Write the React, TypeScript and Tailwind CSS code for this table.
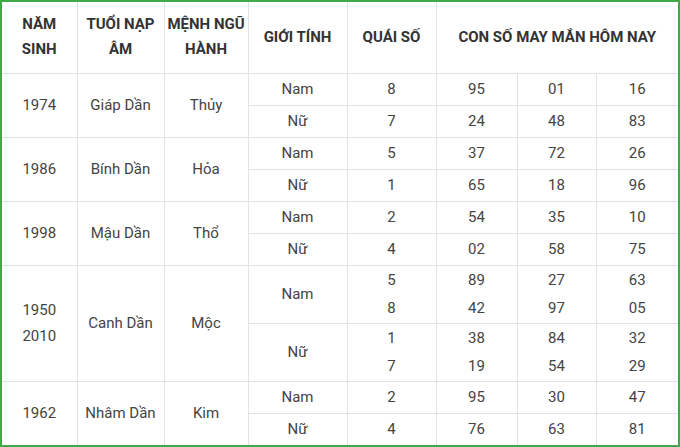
import React from "react";

type Row = {
  year: string[];
  napAm: string;
  menh: string;
  nam: { quai: string[]; nums: string[][] };
  nu: { quai: string[]; nums: string[][] };
  tall?: boolean;
};

const rows: Row[] = [
  {
    year: ["1974"],
    napAm: "Giáp Dần",
    menh: "Thủy",
    nam: { quai: ["8"], nums: [["95", "01", "16"]] },
    nu: { quai: ["7"], nums: [["24", "48", "83"]] },
  },
  {
    year: ["1986"],
    napAm: "Bính Dần",
    menh: "Hỏa",
    nam: { quai: ["5"], nums: [["37", "72", "26"]] },
    nu: { quai: ["1"], nums: [["65", "18", "96"]] },
  },
  {
    year: ["1998"],
    napAm: "Mậu Dần",
    menh: "Thổ",
    nam: { quai: ["2"], nums: [["54", "35", "10"]] },
    nu: { quai: ["4"], nums: [["02", "58", "75"]] },
  },
  {
    year: ["1950", "2010"],
    napAm: "Canh Dần",
    menh: "Mộc",
    nam: {
      quai: ["5", "8"],
      nums: [
        ["89", "27", "63"],
        ["42", "97", "05"],
      ],
    },
    nu: {
      quai: ["1", "7"],
      nums: [
        ["38", "84", "32"],
        ["19", "54", "29"],
      ],
    },
    tall: true,
  },
  {
    year: ["1962"],
    napAm: "Nhâm Dần",
    menh: "Kim",
    nam: { quai: ["2"], nums: [["95", "30", "47"]] },
    nu: { quai: ["4"], nums: [["76", "63", "81"]] },
  },
];

const cell = "border border-[#e2e2e2] text-center align-middle p-0";

function Lines({ items, tall }: { items: string[]; tall?: boolean }) {
  return (
    <div className={tall ? "leading-[28px]" : "leading-[20px]"}>
      {items.map((t, i) => (
        <div key={i}>{t}</div>
      ))}
    </div>
  );
}

export default function App() {
  return (
    <div
      className="w-[680px] h-[447px] bg-white border-2 border-[#3fab47] overflow-hidden"
      style={{ fontFamily: "Roboto, 'Liberation Sans', sans-serif" }}
    >
      <table className="w-full table-fixed border-collapse border-hidden text-[15px] text-[#444]">
        <colgroup>
          <col className="w-[75px]" />
          <col className="w-[87px]" />
          <col className="w-[84px]" />
          <col className="w-[99px]" />
          <col className="w-[89px]" />
          <col className="w-[81px]" />
          <col className="w-[79px]" />
          <col />
        </colgroup>
        <thead>
          <tr className="h-[71px] font-bold text-[#333] leading-[25px]">
            <th className={cell}>
              NĂM
              <br />
              SINH
            </th>
            <th className={cell}>
              TUỔI NẠP
              <br />
              ÂM
            </th>
            <th className={cell}>
              MỆNH NGŨ
              <br />
              HÀNH
            </th>
            <th className={cell}>GIỚI TÍNH</th>
            <th className={cell}>QUÁI SỐ</th>
            <th className={cell} colSpan={3}>
              CON SỐ MAY MẮN HÔM NAY
            </th>
          </tr>
        </thead>
        <tbody>
          {rows.map((r) => {
            const h = r.tall ? "h-[58px]" : "h-[32px]";
            return (
              <React.Fragment key={r.year.join("-")}>
                <tr className={h}>
                  <td className={cell} rowSpan={2}>
                    <div className="leading-[26px]">
                      {r.year.map((y) => (
                        <div key={y}>{y}</div>
                      ))}
                    </div>
                  </td>
                  <td className={cell} rowSpan={2}>
                    {r.napAm}
                  </td>
                  <td className={cell} rowSpan={2}>
                    {r.menh}
                  </td>
                  <td className={cell}>Nam</td>
                  <td className={cell}>
                    <Lines items={r.nam.quai} tall={r.tall} />
                  </td>
                  {[0, 1, 2].map((c) => (
                    <td key={c} className={cell}>
                      <Lines items={r.nam.nums.map((n) => n[c])} tall={r.tall} />
                    </td>
                  ))}
                </tr>
                <tr className={h}>
                  <td className={cell}>Nữ</td>
                  <td className={cell}>
                    <Lines items={r.nu.quai} tall={r.tall} />
                  </td>
                  {[0, 1, 2].map((c) => (
                    <td key={c} className={cell}>
                      <Lines items={r.nu.nums.map((n) => n[c])} tall={r.tall} />
                    </td>
                  ))}
                </tr>
              </React.Fragment>
            );
          })}
        </tbody>
      </table>
    </div>
  );
}
